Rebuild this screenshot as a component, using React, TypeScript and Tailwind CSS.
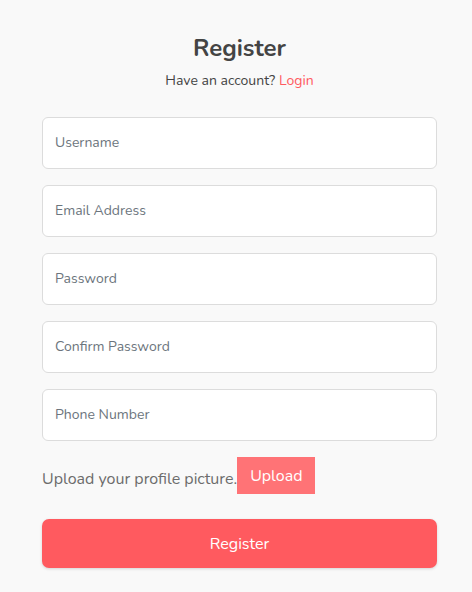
const inputs = ["Username", "Email Address", "Password", "Confirm Password", "Phone Number"];

export default function App() {
  return (
    <div
      className="min-h-[592px] w-full bg-[#f9f9f9] pl-[42px] pr-[35px] pt-[32px] text-[#444]"
      style={{ fontFamily: '"Nunito", "Lato", "Open Sans", sans-serif' }}
    >
      <h1 className="text-center text-[24px] font-bold leading-[32px] text-[#444]">Register</h1>
      <p className="mt-[7px] text-center text-[14px] leading-[20px] text-[#444]">
        Have an account? <a className="text-[#ff5a5f]">Login</a>
      </p>

      <form className="mt-[26px] flex flex-col gap-4">
        {inputs.map((p) => (
          <input
            key={p}
            placeholder={p}
            className="h-[52px] w-full rounded-[6px] border border-[#dcdcdc] bg-white px-[12px] pb-[2px] text-[14px] text-[#444] placeholder-[#6c757d] outline-none"
          />
        ))}
      </form>

      <div className="mt-4 flex items-center">
        <span className="mt-[7px] text-[16px] text-[#6c6c6c]">Upload your profile picture.</span>
        <button className="h-[37px] bg-[#ff7376] px-[13px] text-[16px] text-white">Upload</button>
      </div>

      <button className="mt-[25px] h-[49px] w-full rounded-[7px] bg-[#ff5a5f] text-[16px] text-white shadow-[0_1px_3px_rgba(0,0,0,0.15)]">
        Register
      </button>
    </div>
  );
}
